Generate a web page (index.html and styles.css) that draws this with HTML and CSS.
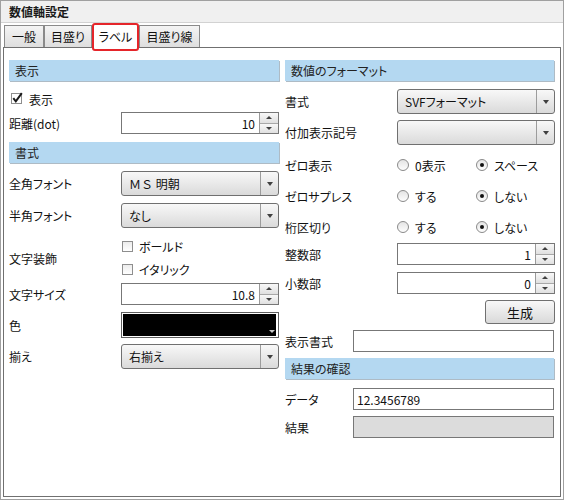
FILE: index.html
```html
<!DOCTYPE html>
<html lang="ja">
<head>
<meta charset="utf-8">
<link rel="stylesheet" href="styles.css">
</head>
<body>
<div class="window">
  <div class="titlebar">数値軸設定</div>
  <div class="tabs">
    <div class="tab w40">一般</div>
    <div class="tab w48">目盛り</div>
    <div class="tab active">ラベル</div>
    <div class="tab w61">目盛り線</div>
  </div>
  <div class="panel">
    <div class="col">
      <div class="sect">表示</div>
      <div class="row h22 mt7">
        <label class="chk ml2">
          <svg class="cb" width="13" height="13" viewBox="0 0 13 13"><rect x="0.5" y="1.5" width="10" height="10" fill="#fff" stroke="#8e8e8e"/><path d="M2.3 6.2 L4.8 9.3 L10.8 1.2" fill="none" stroke="#1a1a1a" stroke-width="2"/></svg>表示
        </label>
      </div>
      <div class="row h22 mt2">
        <div class="lbl">距離(dot)</div>
        <div class="spin"><div class="num">10</div><div class="btns"><div class="btn"><span class="tri-up"></span></div><div class="btn"><span class="tri-down"></span></div></div></div>
      </div>
      <div class="sect mt8">書式</div>
      <div class="row h25 mt8">
        <div class="lbl">全角フォント</div>
        <div class="select"><div class="val fw">ＭＳ 明朝</div><div class="arrow"><span class="tri-down"></span></div></div>
      </div>
      <div class="row h25 mt7">
        <div class="lbl">半角フォント</div>
        <div class="select"><div class="val">なし</div><div class="arrow"><span class="tri-down"></span></div></div>
      </div>
      <div class="row mt7">
        <div class="lbl">文字装飾</div>
        <div class="checks">
          <label class="chk line ml1"><span class="box"></span>ボールド</label>
          <label class="chk line ml1"><span class="box"></span>イタリック</label>
        </div>
      </div>
      <div class="row h22 mt2">
        <div class="lbl">文字サイズ</div>
        <div class="spin"><div class="num">10.8</div><div class="btns"><div class="btn"><span class="tri-up"></span></div><div class="btn"><span class="tri-down"></span></div></div></div>
      </div>
      <div class="row h26 mt7">
        <div class="lbl">色</div>
        <div class="color"><div class="swatch"></div><span class="color-arrow"></span></div>
      </div>
      <div class="row h25 mt6">
        <div class="lbl">揃え</div>
        <div class="select"><div class="val">右揃え</div><div class="arrow"><span class="tri-down"></span></div></div>
      </div>
    </div>

    <div class="col">
      <div class="sect">数値のフォーマット</div>
      <div class="row h25 mt8">
        <div class="lbl">書式</div>
        <div class="select"><div class="val">SVFフォーマット</div><div class="arrow"><span class="tri-down"></span></div></div>
      </div>
      <div class="row h25 mt6">
        <div class="lbl">付加表示記号</div>
        <div class="select"><div class="val"></div><div class="arrow"><span class="tri-down"></span></div></div>
      </div>
      <div class="row h26 mt7">
        <div class="lbl">ゼロ表示</div>
        <div class="opt"><span class="radio"></span>0表示</div>
        <div class="opt"><span class="radio on"></span>スペース</div>
      </div>
      <div class="row h26 mt5">
        <div class="lbl">ゼロサプレス</div>
        <div class="opt"><span class="radio"></span>する</div>
        <div class="opt"><span class="radio on"></span>しない</div>
      </div>
      <div class="row h26 mt5">
        <div class="lbl">桁区切り</div>
        <div class="opt"><span class="radio"></span>する</div>
        <div class="opt"><span class="radio on"></span>しない</div>
      </div>
      <div class="row h22 mt3">
        <div class="lbl">整数部</div>
        <div class="spin"><div class="num">1</div><div class="btns"><div class="btn"><span class="tri-up"></span></div><div class="btn"><span class="tri-down"></span></div></div></div>
      </div>
      <div class="row h22 mt7">
        <div class="lbl">小数部</div>
        <div class="spin"><div class="num">0</div><div class="btns"><div class="btn"><span class="tri-up"></span></div><div class="btn"><span class="tri-down"></span></div></div></div>
      </div>
      <div class="row h24 mt6">
        <div class="gen">生成</div>
      </div>
      <div class="row h22 mt6">
        <div class="lbl short">表示書式</div>
        <div class="text"></div>
      </div>
      <div class="sect mt6">結果の確認</div>
      <div class="row h22 mt9">
        <div class="lbl short">データ</div>
        <div class="text">12.3456789</div>
      </div>
      <div class="row h22 mt6">
        <div class="lbl short">結果</div>
        <div class="text disabled"></div>
      </div>
    </div>
  </div>
</div>
</body>
</html>
```

FILE: styles.css
```css
* { box-sizing: border-box; }
body {
  margin: 0;
  font-family: "Noto Sans CJK JP", "Noto Sans", sans-serif;
  font-size: 12px;
  font-feature-settings: "palt";
  color: #111;
  background: #fff;
}
.window {
  width: 564px;
  height: 500px;
  border: 1px solid #a0a0a0;
  display: flex;
  flex-direction: column;
  background: #fff;
}
.titlebar {
  height: 22px;
  flex: none;
  background: #f0f0f0;
  border-bottom: 1px solid #d2d2d2;
  padding-left: 8px;
  display: flex;
  align-items: center;
  font-weight: bold;
  color: #1a1a1a;
}
.tabs {
  display: flex;
  align-items: flex-end;
  height: 24px;
  flex: none;
  margin-left: 3px;
}
.tab {
  height: 22px;
  border: 1px solid #8a8a8a;
  border-bottom: none;
  background: linear-gradient(#f4f4f4, #dedede);
  display: flex;
  align-items: center;
  justify-content: center;
  color: #111;
}
.w40 { width: 40px; }
.w48 { width: 48px; }
.w61 { width: 61px; }
.tab.active {
  width: 47px;
  height: 28px;
  margin-bottom: -4px;
  background: #fff;
  border: 2px solid #e5252a;
  border-radius: 3px;
  position: relative;
  z-index: 1;
  padding-bottom: 2px;
}
.panel {
  flex: 1;
  margin: 0 2px 2px 2px;
  border: 1px solid #707070;
  padding: 12px 4px 0 5px;
  display: grid;
  grid-template-columns: 271px 270px;
  column-gap: 5px;
  align-items: start;
}
.col { display: flex; flex-direction: column; }
.sect {
  height: 21px;
  background: #b4d8f1;
  box-shadow: 1px 1px 0 #aebbc5;
  margin-right: 1px;
  padding-left: 6px;
  display: flex;
  align-items: center;
  color: #222;
}
.row { display: flex; align-items: center; }
.h22 { height: 22px; }
.h24 { height: 24px; }
.h25 { height: 25px; }
.h26 { height: 26px; }
.mt2 { margin-top: 2px; }
.mt3 { margin-top: 3px; }
.mt5 { margin-top: 5px; }
.mt6 { margin-top: 6px; }
.mt7 { margin-top: 7px; }
.mt8 { margin-top: 8px; }
.mt9 { margin-top: 9px; }
.ml1 { margin-left: 1px; }
.ml2 { margin-left: 2px; }
.lbl { width: 112px; flex: none; }
.lbl.short { width: 68px; }

.chk { display: flex; align-items: center; }
.chk .cb { margin-right: 5px; margin-top: -2px; }
.chk.line { height: 23px; }
.box {
  width: 11px;
  height: 11px;
  border: 1px solid #8e8e8e;
  background: linear-gradient(#ececec, #fff);
  margin-right: 6px;
}
.checks { display: flex; flex-direction: column; }

.select {
  width: 158px;
  height: 25px;
  border: 1px solid #707070;
  border-radius: 3px;
  background: linear-gradient(#f8f8f8, #dadada);
  display: flex;
}
.select .val {
  flex: 1;
  padding-left: 7px;
  display: flex;
  align-items: center;
}
.select .val.fw { font-feature-settings: normal; white-space: pre; }
.select .arrow {
  width: 18px;
  border-left: 1px solid #9c9c9c;
  display: flex;
  align-items: center;
  justify-content: center;
}
.tri-down {
  width: 0;
  height: 0;
  border-left: 3.5px solid transparent;
  border-right: 3.5px solid transparent;
  border-top: 4px solid #404040;
}
.tri-up {
  width: 0;
  height: 0;
  border-left: 3.5px solid transparent;
  border-right: 3.5px solid transparent;
  border-bottom: 4px solid #404040;
}

.spin {
  width: 158px;
  height: 22px;
  border: 1px solid #777;
  display: flex;
  background: #fff;
}
.spin .num {
  flex: 1;
  padding-right: 4px;
  display: flex;
  align-items: center;
  justify-content: flex-end;
}
.spin .btns {
  width: 19px;
  display: flex;
  flex-direction: column;
  border-left: 1px solid #9a9a9a;
}
.spin .btn {
  flex: 1;
  background: linear-gradient(#f8f8f8, #e0e0e0);
  display: flex;
  align-items: center;
  justify-content: center;
}
.spin .btn + .btn { border-top: 1px solid #a8a8a8; }
.spin .btn .tri-up,
.spin .btn .tri-down {
  border-left-width: 3px;
  border-right-width: 3px;
  border-top-width: 3px;
  border-bottom-width: 3px;
}
.spin .btn .tri-up { border-top: none; }
.spin .btn .tri-down { border-bottom: none; }

.color {
  width: 158px;
  height: 26px;
  border: 1px solid #5e5e5e;
  padding: 1px 2px 1px 1px;
  background: #fff;
  position: relative;
}
.swatch { height: 100%; background: #000; }
.color-arrow {
  position: absolute;
  right: 3px;
  bottom: 4px;
  width: 0;
  height: 0;
  border-left: 3px solid transparent;
  border-right: 3px solid transparent;
  border-top: 3px solid #c8c8c8;
}

.opt { width: 82px; display: flex; align-items: center; }
.radio {
  width: 12px;
  height: 12px;
  border-radius: 50%;
  border: 1px solid #8a8a8a;
  background: linear-gradient(#e4e4e4, #fdfdfd);
  margin-right: 6px;
  display: flex;
  align-items: center;
  justify-content: center;
}
.radio.on::after {
  content: "";
  width: 4px;
  height: 4px;
  border-radius: 50%;
  background: #111;
}

.gen {
  width: 70px;
  height: 24px;
  margin-left: auto;
  border: 1px solid #707070;
  border-radius: 3px;
  background: linear-gradient(#f8f8f8, #d9d9d9);
  display: flex;
  align-items: center;
  justify-content: center;
  font-size: 13px;
}
.text {
  flex: 1;
  height: 22px;
  border: 1px solid #777;
  padding-left: 3px;
  display: flex;
  align-items: center;
  background: #fff;
  margin-right: 1px;
}
.text.disabled { background: #dcdcdc; }
```
